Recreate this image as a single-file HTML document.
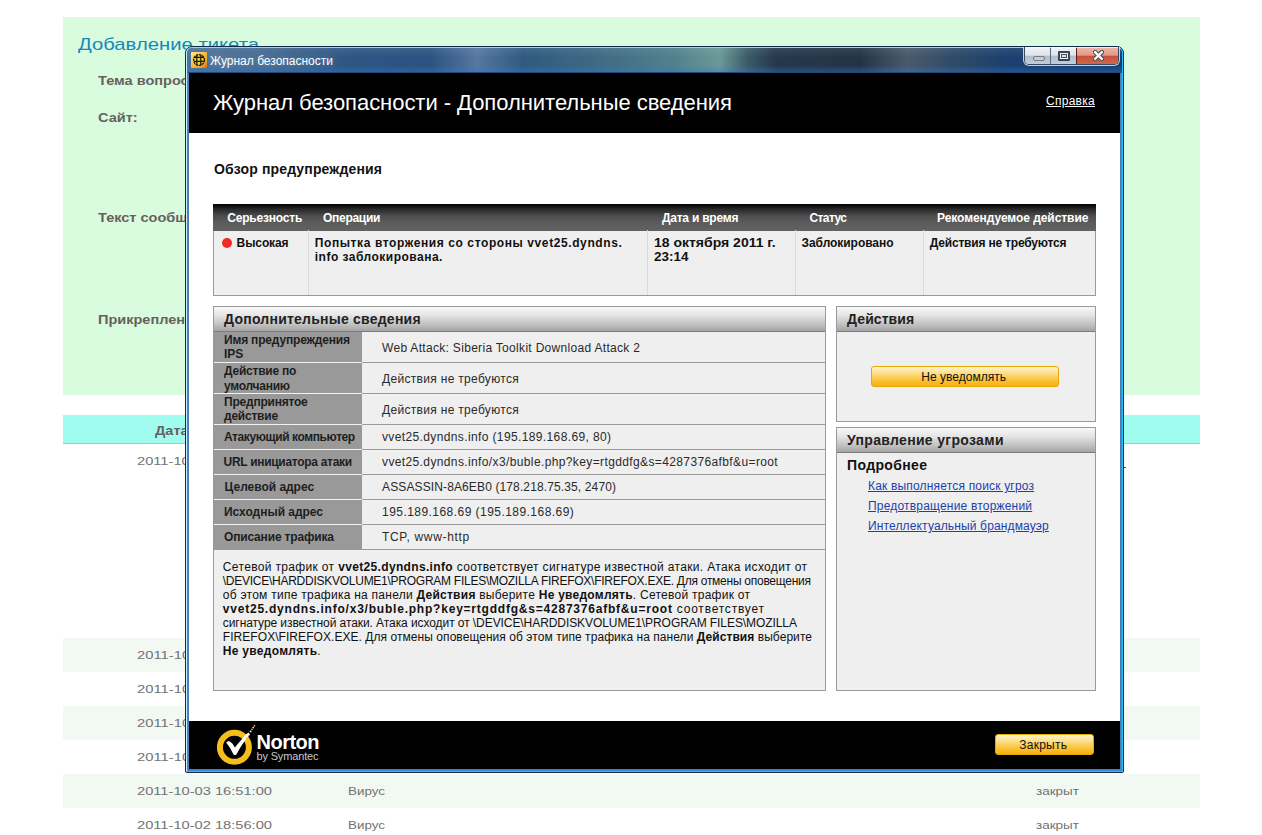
<!DOCTYPE html>
<html><head><meta charset="utf-8">
<style>
*{margin:0;padding:0;box-sizing:border-box}
html,body{width:1262px;height:835px;overflow:hidden;background:#fff;position:relative;font-family:"Liberation Sans",sans-serif}
.b{position:absolute}
.t{position:absolute;white-space:nowrap;font-family:"Liberation Sans",sans-serif}
.w{z-index:2}
</style></head><body>
<!-- page background -->
<div class="b" style="left:63px;top:17px;width:1137px;height:378px;background:#d8fcdd"></div>
<div class="b" style="left:63px;top:415px;width:1137px;height:29px;background:#a0fcef;border-bottom:1px solid #c4bcbc"></div>
<div class="b" style="left:63px;top:638px;width:1137px;height:34px;background:#f2f9f3"></div>
<div class="b" style="left:63px;top:706px;width:1137px;height:34px;background:#f2f9f3"></div>
<div class="b" style="left:63px;top:774px;width:1137px;height:34px;background:#f2f9f3"></div>
<div class="b" style="left:1124px;top:467px;width:2px;height:1px;background:#446"></div>

<!-- window frame -->
<div class="b w" style="left:185px;top:46px;width:939px;height:727px;border:1px solid #11294a;border-radius:7px 7px 2px 2px;background:#3a88e2"></div>
<div class="b w" style="left:186px;top:47px;width:937px;height:725px;border:1px solid #1cc6fc;border-left-color:#cdeefc;border-top-color:#a6cce6;border-radius:6px 6px 1px 1px;"></div>
<div class="b w" style="left:188px;top:72px;width:933px;height:698px;background:#4a7cb6"></div>
<div class="b w" style="left:187px;top:48px;width:935px;height:25px;border-radius:5px 5px 0 0;background:linear-gradient(90deg,#4d7398 0%,#436a92 8%,#2d5684 17%,#2b5280 26%,#5577a0 31%,#2f5a80 36%,#3f6a84 44%,#50808c 52%,#6a9898 57%,#3a5a68 60%,#24384c 63%,#243446 72%,#4a5a6c 77%,#2e4a68 82%,#1b3f70 88%,#173d72 100%)"></div>
<div class="b w" style="left:187px;top:48px;width:935px;height:25px;border-radius:5px 5px 0 0;background:linear-gradient(180deg,rgba(255,255,255,.08) 0%,rgba(255,255,255,0) 40%,rgba(40,110,190,0) 70%,rgba(50,120,200,.45) 100%)"></div>
<div class="b w" style="left:188px;top:72px;width:933px;height:1px;background:#204a7a"></div>
<!-- window icon -->
<div class="b w" style="left:191px;top:52px;width:16px;height:16px;background:linear-gradient(135deg,#ffe890 0%,#fbc040 45%,#f09a20 80%,#d86a08 100%);border-radius:1px"></div>
<svg class="b w" style="left:191px;top:52px" width="16" height="16" viewBox="0 0 16 16"><circle cx="8" cy="8" r="5.4" fill="#f8d020" stroke="#151515" stroke-width="1.3" stroke-dasharray="2.4 0.7"/><path d="M5.8 3.1V12.9M9.8 3.1V12.9M3.1 5.3H12.9M3.1 9.4H12.9" stroke="#151515" stroke-width="1.2"/></svg>
<!-- window buttons -->
<div class="b w" style="left:1023px;top:47px;width:97px;height:19px;border-radius:0 0 6px 6px;background:rgba(255,255,255,.75)"></div>
<div class="b w" style="left:1024px;top:47px;width:95px;height:18px;border:1px solid #3a4a5e;border-top:none;border-radius:0 0 5px 5px;overflow:hidden">
  <div class="b" style="left:0;top:0;width:26px;height:18px;background:linear-gradient(180deg,#f2f4f8 0%,#dde3ea 45%,#b0bfcf 52%,#c4d0dc 100%);border-right:1px solid #5a6a7c"></div>
  <div class="b" style="left:26px;top:0;width:26px;height:18px;background:linear-gradient(180deg,#f2f4f8 0%,#dde3ea 45%,#b0bfcf 52%,#c4d0dc 100%);border-right:1px solid #5a2018"></div>
  <div class="b" style="left:52px;top:0;width:43px;height:18px;background:linear-gradient(180deg,#f0b8aa 0%,#e09a88 45%,#c8503a 52%,#cf6a50 100%);box-shadow:inset -1px -1px 0 #6a2018"></div>
  <div class="b" style="left:8px;top:9px;width:12px;height:5px;background:#cccccc;border:1px solid #707c8a;border-radius:2px"></div>
  <div class="b" style="left:0;top:0;width:95px;height:1px;background:rgba(255,255,255,.7)"></div>
  <div class="b" style="left:33px;top:4px;width:12px;height:10px;border:2px solid #3e4654;background:#f2f2f2;border-radius:1px"></div>
  <div class="b" style="left:36px;top:7px;width:6px;height:4px;border:1px solid #4a5260;background:#dfe3e8"></div>
  <svg class="b" style="left:68px;top:3px" width="11" height="11" viewBox="0 0 11 11"><path d="M2.2 2.2L8.8 8.8M8.8 2.2L2.2 8.8" stroke="#3c4654" stroke-width="4.4" stroke-linecap="square"/><path d="M2.2 2.2L8.8 8.8M8.8 2.2L2.2 8.8" stroke="#f6f6f6" stroke-width="2.4" stroke-linecap="square"/></svg>
</div>

<!-- window content -->
<div class="b w" style="left:189px;top:73px;width:931px;height:696px;background:#fff"></div>
<div class="b w" style="left:189px;top:73px;width:931px;height:60px;background:#000"></div>
<div class="b w" style="left:189px;top:721px;width:931px;height:48px;background:#000"></div>

<!-- summary table -->
<div class="b w" style="left:213px;top:204px;width:883px;height:92px;background:#efefef;border:1px solid #9a9a9a;border-top:none"></div>
<div class="b w" style="left:213px;top:204px;width:883px;height:27px;background:linear-gradient(180deg,#000 0%,#2a2a2a 20%,#4e4e4e 45%,#5c5c5c 70%,#626262 100%)"></div>
<div class="b w" style="left:308px;top:230px;width:1px;height:65px;background:#dadada"></div>
<div class="b w" style="left:647px;top:230px;width:1px;height:65px;background:#dadada"></div>
<div class="b w" style="left:795px;top:230px;width:1px;height:65px;background:#dadada"></div>
<div class="b w" style="left:923px;top:230px;width:1px;height:65px;background:#dadada"></div>
<div class="b w" style="left:222px;top:238px;width:10px;height:10px;border-radius:50%;background:#ee2b24"></div>

<!-- details panel -->
<div class="b w" style="left:213px;top:306px;width:613px;height:385px;background:#efefef;border:1px solid #9a9a9a"></div>
<div class="b w" style="left:214px;top:307px;width:611px;height:24px;background:linear-gradient(180deg,#f8f8f8 0%,#e4e4e4 35%,#c4c4c4 70%,#a4a4a4 100%)"></div>
<div class="b w" style="left:214px;top:331px;width:611px;height:1px;background:#7c7c7c"></div>
<div class="b w" style="left:214px;top:332px;width:148px;height:217px;background:#999"></div>
<!-- row separators -->
<div class="b w" style="left:214px;top:362px;width:148px;height:1px;background:#f2f2f2"></div>
<div class="b w" style="left:362px;top:362px;width:463px;height:1px;background:#9a9a9a"></div>
<div class="b w" style="left:214px;top:393px;width:148px;height:1px;background:#f2f2f2"></div>
<div class="b w" style="left:362px;top:393px;width:463px;height:1px;background:#9a9a9a"></div>
<div class="b w" style="left:214px;top:424px;width:148px;height:1px;background:#f2f2f2"></div>
<div class="b w" style="left:362px;top:424px;width:463px;height:1px;background:#9a9a9a"></div>
<div class="b w" style="left:214px;top:449px;width:148px;height:1px;background:#f2f2f2"></div>
<div class="b w" style="left:362px;top:449px;width:463px;height:1px;background:#9a9a9a"></div>
<div class="b w" style="left:214px;top:474px;width:148px;height:1px;background:#f2f2f2"></div>
<div class="b w" style="left:362px;top:474px;width:463px;height:1px;background:#9a9a9a"></div>
<div class="b w" style="left:214px;top:499px;width:148px;height:1px;background:#f2f2f2"></div>
<div class="b w" style="left:362px;top:499px;width:463px;height:1px;background:#9a9a9a"></div>
<div class="b w" style="left:214px;top:524px;width:148px;height:1px;background:#f2f2f2"></div>
<div class="b w" style="left:362px;top:524px;width:463px;height:1px;background:#9a9a9a"></div>
<div class="b w" style="left:214px;top:549px;width:611px;height:1px;background:#9a9a9a"></div>

<!-- right panel 1 -->
<div class="b w" style="left:836px;top:306px;width:260px;height:116px;background:#efefef;border:1px solid #9a9a9a"></div>
<div class="b w" style="left:837px;top:307px;width:258px;height:24px;background:linear-gradient(180deg,#f8f8f8 0%,#e4e4e4 35%,#c4c4c4 70%,#a4a4a4 100%)"></div>
<div class="b w" style="left:837px;top:331px;width:258px;height:1px;background:#7c7c7c"></div>
<div class="b w" style="left:871px;top:366px;width:188px;height:21px;border:1px solid #e8a808;border-radius:3px;background:linear-gradient(180deg,#fff4d0 0%,#fcd878 40%,#f9bf2c 75%,#f7b010 100%)"></div>
<!-- right panel 2 -->
<div class="b w" style="left:836px;top:427px;width:260px;height:264px;background:#efefef;border:1px solid #9a9a9a"></div>
<div class="b w" style="left:837px;top:428px;width:258px;height:24px;background:linear-gradient(180deg,#f8f8f8 0%,#e4e4e4 35%,#c4c4c4 70%,#a4a4a4 100%)"></div>
<div class="b w" style="left:837px;top:452px;width:258px;height:1px;background:#7c7c7c"></div>

<!-- footer -->
<div class="b w" style="left:995px;top:734px;width:99px;height:21px;border:1px solid #e8a808;border-radius:3px;background:linear-gradient(180deg,#fff4d0 0%,#fcd878 40%,#f9bf2c 75%,#f7b010 100%)"></div>
<svg class="b w" style="left:212px;top:722px" width="50" height="46" viewBox="0 0 50 46">
  <circle cx="22.4" cy="25.3" r="14.5" fill="none" stroke="#f7bd1a" stroke-width="6"/>
  <path d="M14.2 20.6 Q15.8 18.6 18 19.6 Q20.6 21.2 22.8 25.4 L33.8 12.4 L36.6 10.4 L38 12.4 Q29.5 22 24.6 32.2 Q23 34 21.4 32.2 Q18.2 25.6 14.2 20.6 Z" fill="#fff"/>
  <circle cx="38.6" cy="9.4" r="0.9" fill="#fff"/>
  <circle cx="40" cy="7.4" r="0.8" fill="#f7bd1a"/>
  <circle cx="41.2" cy="5.6" r="0.8" fill="#fff"/>
  <circle cx="42.4" cy="3.8" r="0.9" fill="#f7bd1a"/>
  <circle cx="36.6" cy="13.2" r="0.7" fill="#f7bd1a"/>
  <circle cx="34.4" cy="16.2" r="0.7" fill="#f7bd1a"/>
</svg>

<div class=t style="left:78.0px;top:35.81px;font-size:17px;line-height:17px;font-weight:normal;color:#1589bb;z-index:0;transform:scaleX(1.1916);transform-origin:0 0;">Добавление тикета</div>
<div class=t style="left:98.3px;top:74.64px;font-size:12px;line-height:12px;font-weight:bold;color:#686060;z-index:0;transform:scaleX(1.21);transform-origin:0 0;">Тема вопроса:</div>
<div class=t style="left:98.3px;top:111.84px;font-size:12px;line-height:12px;font-weight:bold;color:#686060;z-index:0;transform:scaleX(1.21);transform-origin:0 0;">Сайт:</div>
<div class=t style="left:98.4px;top:212.44px;font-size:12px;line-height:12px;font-weight:bold;color:#686060;z-index:0;transform:scaleX(1.21);transform-origin:0 0;">Текст сообщения:</div>
<div class=t style="left:98.4px;top:314.04px;font-size:12px;line-height:12px;font-weight:bold;color:#686060;z-index:0;transform:scaleX(1.21);transform-origin:0 0;">Прикрепленный файл:</div>
<div class=t style="left:155.0px;top:425.14px;font-size:12px;line-height:12px;font-weight:bold;color:#686060;z-index:0;transform:scaleX(1.21);transform-origin:0 0;">Дата</div>
<div class=t style="left:137.0px;top:456.27px;font-size:11.5px;line-height:11.5px;font-weight:normal;color:#727272;z-index:0;transform:scaleX(1.2743);transform-origin:0 0;">2011-10-18 23:14:00</div>
<div class=t style="left:137.0px;top:650.27px;font-size:11.5px;line-height:11.5px;font-weight:normal;color:#727272;z-index:0;transform:scaleX(1.2848);transform-origin:0 0;">2011-10-05 11:10:00</div>
<div class=t style="left:137.0px;top:684.27px;font-size:11.5px;line-height:11.5px;font-weight:normal;color:#727272;z-index:0;transform:scaleX(1.2848);transform-origin:0 0;">2011-10-05 11:10:00</div>
<div class=t style="left:137.0px;top:718.27px;font-size:11.5px;line-height:11.5px;font-weight:normal;color:#727272;z-index:0;transform:scaleX(1.2848);transform-origin:0 0;">2011-10-05 11:10:00</div>
<div class=t style="left:137.0px;top:752.27px;font-size:11.5px;line-height:11.5px;font-weight:normal;color:#727272;z-index:0;transform:scaleX(1.2848);transform-origin:0 0;">2011-10-05 11:10:00</div>
<div class=t style="left:137.0px;top:786.27px;font-size:11.5px;line-height:11.5px;font-weight:normal;color:#727272;z-index:0;transform:scaleX(1.2743);transform-origin:0 0;">2011-10-03 16:51:00</div>
<div class=t style="left:137.0px;top:820.27px;font-size:11.5px;line-height:11.5px;font-weight:normal;color:#727272;z-index:0;transform:scaleX(1.2743);transform-origin:0 0;">2011-10-02 18:56:00</div>
<div class=t style="left:348.0px;top:786.27px;font-size:11.5px;line-height:11.5px;font-weight:normal;color:#727272;z-index:0;transform:scaleX(1.1659);transform-origin:0 0;">Вирус</div>
<div class=t style="left:348.0px;top:820.27px;font-size:11.5px;line-height:11.5px;font-weight:normal;color:#727272;z-index:0;transform:scaleX(1.1659);transform-origin:0 0;">Вирус</div>
<div class=t style="left:1036.0px;top:786.27px;font-size:11.5px;line-height:11.5px;font-weight:normal;color:#727272;z-index:0;transform:scaleX(1.1736);transform-origin:0 0;">закрыт</div>
<div class=t style="left:1036.0px;top:820.27px;font-size:11.5px;line-height:11.5px;font-weight:normal;color:#727272;z-index:0;transform:scaleX(1.1736);transform-origin:0 0;">закрыт</div>
<div class=t style="left:210.0px;top:54.84px;font-size:12px;line-height:12px;font-weight:normal;color:#fff;z-index:3;letter-spacing:0.001px;text-shadow:0 0 6px rgba(255,255,255,.35);">Журнал безопасности</div>
<div class=t style="left:213.0px;top:91.58px;font-size:22px;line-height:22px;font-weight:normal;color:#fff;z-index:3;letter-spacing:-0.043px;">Журнал безопасности - Дополнительные сведения</div>
<div class=t style="left:1046.0px;top:94.84px;font-size:12px;line-height:12px;font-weight:normal;color:#fff;z-index:3;letter-spacing:0.270px;text-decoration:underline;">Справка</div>
<div class=t style="left:214.0px;top:161.95px;font-size:14px;line-height:14px;font-weight:bold;color:#111;z-index:3;letter-spacing:0.155px;">Обзор предупреждения</div>
<div class=t style="left:227.3px;top:212.14px;font-size:12px;line-height:12px;font-weight:bold;color:#fff;z-index:3;letter-spacing:-0.205px;">Серьезность</div>
<div class=t style="left:322.9px;top:212.14px;font-size:12px;line-height:12px;font-weight:bold;color:#fff;z-index:3;letter-spacing:-0.256px;">Операции</div>
<div class=t style="left:661.9px;top:212.14px;font-size:12px;line-height:12px;font-weight:bold;color:#fff;z-index:3;letter-spacing:-0.220px;">Дата и время</div>
<div class=t style="left:809.5px;top:212.14px;font-size:12px;line-height:12px;font-weight:bold;color:#fff;z-index:3;letter-spacing:-0.591px;">Статус</div>
<div class=t style="left:937.0px;top:212.14px;font-size:12px;line-height:12px;font-weight:bold;color:#fff;z-index:3;letter-spacing:-0.062px;">Рекомендуемое действие</div>
<div class=t style="left:236.6px;top:236.94px;font-size:12px;line-height:12px;font-weight:bold;color:#111;z-index:3;letter-spacing:-0.102px;">Высокая</div>
<div class=t style="left:314.8px;top:236.94px;font-size:12px;line-height:12px;font-weight:bold;color:#111;z-index:3;letter-spacing:0.594px;">Попытка вторжения со стороны vvet25.dyndns.</div>
<div class=t style="left:314.8px;top:251.04px;font-size:12px;line-height:12px;font-weight:bold;color:#111;z-index:3;letter-spacing:0.483px;">info заблокирована.</div>
<div class=t style="left:653.9px;top:236.94px;font-size:12px;line-height:12px;font-weight:bold;color:#111;z-index:3;transform:scaleX(1.1665);transform-origin:0 0;">18 октября 2011 г.</div>
<div class=t style="left:653.9px;top:251.04px;font-size:12px;line-height:12px;font-weight:bold;color:#111;z-index:3;transform:scaleX(1.1237);transform-origin:0 0;">23:14</div>
<div class=t style="left:801.5px;top:236.94px;font-size:12px;line-height:12px;font-weight:bold;color:#111;z-index:3;letter-spacing:-0.052px;">Заблокировано</div>
<div class=t style="left:929.8px;top:236.94px;font-size:12px;line-height:12px;font-weight:bold;color:#111;z-index:3;letter-spacing:-0.197px;">Действия не требуются</div>
<div class=t style="left:224.1px;top:312.25px;font-size:14px;line-height:14px;font-weight:bold;color:#222;z-index:3;letter-spacing:0.229px;">Дополнительные сведения</div>
<div class=t style="left:224.0px;top:334.24px;font-size:12px;line-height:12px;font-weight:bold;color:#1e1e1e;z-index:3;letter-spacing:-0.179px;">Имя предупреждения</div>
<div class=t style="left:224.0px;top:348.14px;font-size:12px;line-height:12px;font-weight:bold;color:#1e1e1e;z-index:3;">IPS</div>
<div class=t style="left:224.0px;top:365.14px;font-size:12px;line-height:12px;font-weight:bold;color:#1e1e1e;z-index:3;letter-spacing:-0.234px;">Действие по</div>
<div class=t style="left:224.0px;top:379.84px;font-size:12px;line-height:12px;font-weight:bold;color:#1e1e1e;z-index:3;letter-spacing:-0.264px;">умолчанию</div>
<div class=t style="left:224.0px;top:395.84px;font-size:12px;line-height:12px;font-weight:bold;color:#1e1e1e;z-index:3;letter-spacing:-0.217px;">Предпринятое</div>
<div class=t style="left:224.0px;top:410.24px;font-size:12px;line-height:12px;font-weight:bold;color:#1e1e1e;z-index:3;letter-spacing:-0.222px;">действие</div>
<div class=t style="left:224.0px;top:430.54px;font-size:12px;line-height:12px;font-weight:bold;color:#1e1e1e;z-index:3;letter-spacing:-0.409px;">Атакующий компьютер</div>
<div class=t style="left:223.6px;top:456.44px;font-size:12px;line-height:12px;font-weight:bold;color:#1e1e1e;z-index:3;letter-spacing:-0.300px;">URL инициатора атаки</div>
<div class=t style="left:224.6px;top:480.54px;font-size:12px;line-height:12px;font-weight:bold;color:#1e1e1e;z-index:3;letter-spacing:-0.025px;">Целевой адрес</div>
<div class=t style="left:224.0px;top:505.84px;font-size:12px;line-height:12px;font-weight:bold;color:#1e1e1e;z-index:3;letter-spacing:-0.025px;">Исходный адрес</div>
<div class=t style="left:224.0px;top:530.74px;font-size:12px;line-height:12px;font-weight:bold;color:#1e1e1e;z-index:3;letter-spacing:-0.169px;">Описание трафика</div>
<div class=t style="left:382.0px;top:341.64px;font-size:12px;line-height:12px;font-weight:normal;color:#2a2a2a;z-index:3;letter-spacing:0.310px;">Web Attack: Siberia Toolkit Download Attack 2</div>
<div class=t style="left:382.0px;top:373.44px;font-size:12px;line-height:12px;font-weight:normal;color:#2a2a2a;z-index:3;letter-spacing:0.312px;">Действия не требуются</div>
<div class=t style="left:382.0px;top:404.44px;font-size:12px;line-height:12px;font-weight:normal;color:#2a2a2a;z-index:3;letter-spacing:0.312px;">Действия не требуются</div>
<div class=t style="left:382.0px;top:431.44px;font-size:12px;line-height:12px;font-weight:normal;color:#2a2a2a;z-index:3;letter-spacing:0.373px;">vvet25.dyndns.info (195.189.168.69, 80)</div>
<div class=t style="left:382.0px;top:456.44px;font-size:12px;line-height:12px;font-weight:normal;color:#2a2a2a;z-index:3;letter-spacing:0.377px;">vvet25.dyndns.info/x3/buble.php?key=rtgddfg&amp;s=4287376afbf&amp;u=root</div>
<div class=t style="left:382.0px;top:481.44px;font-size:12px;line-height:12px;font-weight:normal;color:#2a2a2a;z-index:3;letter-spacing:0.125px;">ASSASSIN-8A6EB0 (178.218.75.35, 2470)</div>
<div class=t style="left:382.0px;top:506.44px;font-size:12px;line-height:12px;font-weight:normal;color:#2a2a2a;z-index:3;letter-spacing:0.455px;">195.189.168.69 (195.189.168.69)</div>
<div class=t style="left:382.0px;top:531.44px;font-size:12px;line-height:12px;font-weight:normal;color:#2a2a2a;z-index:3;letter-spacing:0.680px;">TCP, www-http</div>
<div class=t style="left:222.8px;top:560.64px;font-size:12px;line-height:12px;font-weight:normal;color:#111;z-index:3;letter-spacing:0.342px;">Сетевой трафик от <b>vvet25.dyndns.info</b> соответствует сигнатуре известной атаки. Атака исходит от</div>
<div class=t style="left:222.8px;top:574.69px;font-size:12px;line-height:12px;font-weight:normal;color:#111;z-index:3;letter-spacing:-0.260px;">\DEVICE\HARDDISKVOLUME1\PROGRAM FILES\MOZILLA FIREFOX\FIREFOX.EXE. Для отмены оповещения</div>
<div class=t style="left:222.8px;top:588.74px;font-size:12px;line-height:12px;font-weight:normal;color:#111;z-index:3;letter-spacing:0.257px;">об этом типе трафика на панели <b>Действия</b> выберите <b>Не уведомлять</b>. Сетевой трафик от</div>
<div class=t style="left:222.8px;top:602.79px;font-size:12px;line-height:12px;font-weight:normal;color:#111;z-index:3;letter-spacing:0.783px;"><b>vvet25.dyndns.info/x3/buble.php?key=rtgddfg&amp;s=4287376afbf&amp;u=root</b> соответствует</div>
<div class=t style="left:222.8px;top:616.84px;font-size:12px;line-height:12px;font-weight:normal;color:#111;z-index:3;letter-spacing:-0.075px;">сигнатуре известной атаки. Атака исходит от \DEVICE\HARDDISKVOLUME1\PROGRAM FILES\MOZILLA</div>
<div class=t style="left:222.8px;top:630.89px;font-size:12px;line-height:12px;font-weight:normal;color:#111;z-index:3;letter-spacing:0.057px;">FIREFOX\FIREFOX.EXE. Для отмены оповещения об этом типе трафика на панели <b>Действия</b> выберите</div>
<div class=t style="left:222.8px;top:644.94px;font-size:12px;line-height:12px;font-weight:normal;color:#111;z-index:3;letter-spacing:0.289px;"><b>Не уведомлять</b>.</div>
<div class=t style="left:847.1px;top:311.55px;font-size:14px;line-height:14px;font-weight:bold;color:#222;z-index:3;letter-spacing:0.062px;">Действия</div>
<div class=t style="left:921.3px;top:371.04px;font-size:12px;line-height:12px;font-weight:normal;color:#111;z-index:3;letter-spacing:0.017px;">Не уведомлять</div>
<div class=t style="left:847.0px;top:433.05px;font-size:14px;line-height:14px;font-weight:bold;color:#222;z-index:3;letter-spacing:0.323px;">Управление угрозами</div>
<div class=t style="left:847.0px;top:458.15px;font-size:14px;line-height:14px;font-weight:bold;color:#111;z-index:3;letter-spacing:0.361px;">Подробнее</div>
<div class=t style="left:868.0px;top:480.24px;font-size:12px;line-height:12px;font-weight:normal;color:#1c3fae;z-index:3;letter-spacing:0.180px;text-decoration:underline;">Как выполняется поиск угроз</div>
<div class=t style="left:868.0px;top:500.34px;font-size:12px;line-height:12px;font-weight:normal;color:#1c3fae;z-index:3;letter-spacing:0.189px;text-decoration:underline;">Предотвращение вторжений</div>
<div class=t style="left:868.0px;top:520.24px;font-size:12px;line-height:12px;font-weight:normal;color:#1c3fae;z-index:3;letter-spacing:0.144px;text-decoration:underline;">Интеллектуальный брандмауэр</div>
<div class=t style="left:1019.2px;top:738.84px;font-size:12px;line-height:12px;font-weight:normal;color:#111;z-index:3;letter-spacing:0.264px;">Закрыть</div>
<div class=t style="left:256.5px;top:731.97px;font-size:20px;line-height:20px;font-weight:bold;color:#fff;z-index:3;letter-spacing:-0.709px;letter-spacing:-0.5px;">Norton</div>
<div class=t style="left:256.5px;top:750.89px;font-size:11px;line-height:11px;font-weight:normal;color:#c8c8c8;z-index:3;letter-spacing:-0.159px;">by Symantec</div>
</body></html>
